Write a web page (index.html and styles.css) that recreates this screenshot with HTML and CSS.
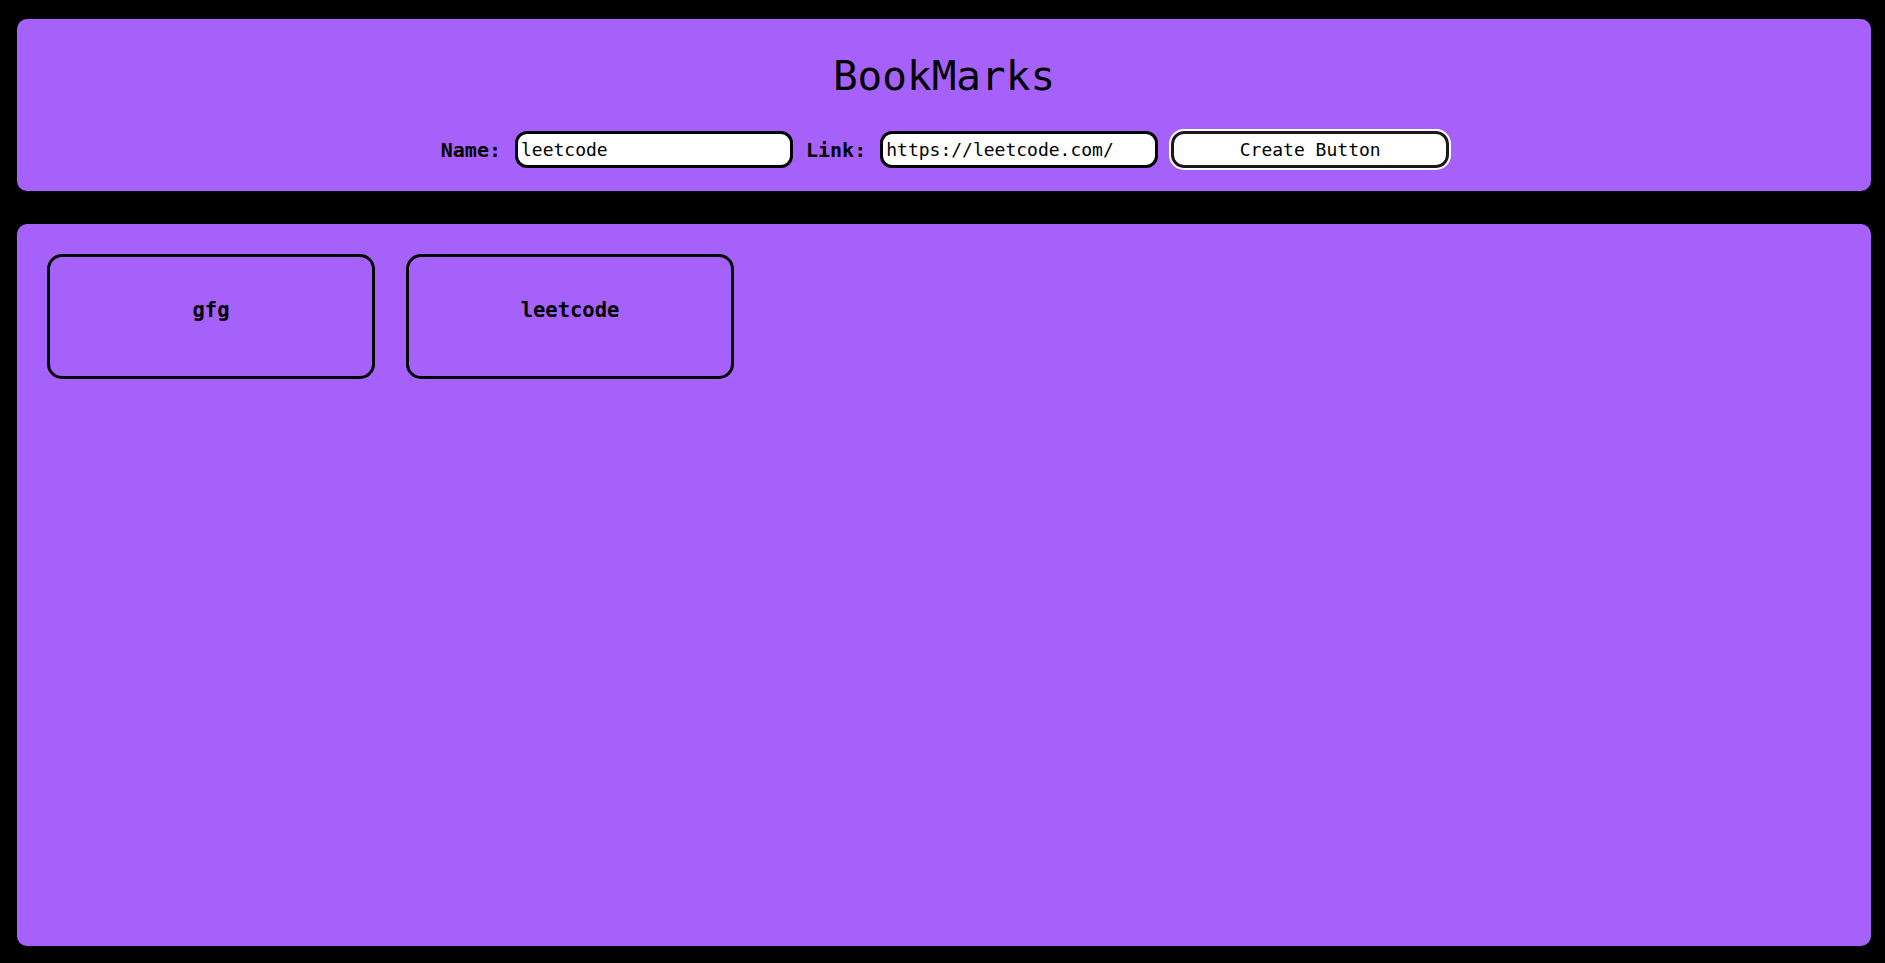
FILE: index.html
```html
<!DOCTYPE html>
<html lang="en">
<head>
<meta charset="utf-8">
<title>BookMarks</title>
<link rel="stylesheet" href="styles.css">
</head>
<body>
  <header class="panel header">
    <h1 class="title">BookMarks</h1>
    <form class="form-row">
      <label class="label" for="name">Name:</label>
      <input class="field" id="name" type="text" value="leetcode">
      <label class="label" for="link">Link:</label>
      <input class="field" id="link" type="text" value="https://leetcode.com/">
      <button class="create-btn" type="button">Create Button</button>
    </form>
  </header>
  <main class="panel board">
    <div class="card">gfg</div>
    <div class="card">leetcode</div>
  </main>
</body>
</html>
```

FILE: styles.css
```css
html, body {
  height: 100%;
}
body {
  margin: 0;
  box-sizing: border-box;
  padding: 19px 14px 17px 17px;
  background: #000;
  display: flex;
  flex-direction: column;
  gap: 33px;
  font-family: "DejaVu Sans Mono", "Liberation Mono", monospace;
  color: #000;
}
.panel {
  background: #a661fa;
  border-radius: 10px;
}
.header {
  padding: 34px 0 23px;
}
.title {
  margin: 0;
  text-align: center;
  font-size: 41px;
  line-height: 46px;
  font-weight: 400;
}
.form-row {
  margin: 32px 0 0;
  display: flex;
  justify-content: center;
  align-items: center;
  padding-left: 2px;
}
.label {
  font-size: 20px;
  font-weight: 700;
  margin-right: 14px;
}
.field {
  box-sizing: border-box;
  width: 278px;
  height: 37px;
  border: 3px solid #000;
  border-radius: 12px;
  background: #fff;
  padding: 0 4px 0 3px;
  font-family: "DejaVu Sans Mono", "Liberation Mono", monospace;
  font-size: 18px;
  color: #000;
  margin-right: 13px;
  outline: none;
}
.create-btn {
  box-sizing: border-box;
  width: 278px;
  height: 37px;
  border: 3px solid #1a1a1a;
  border-radius: 13px;
  background: #fff;
  outline: 2px solid #fff;
  font-family: "DejaVu Sans Mono", "Liberation Mono", monospace;
  font-size: 18px;
  color: #000;
  padding: 0;
}
.board {
  flex: 1;
  padding: 30px;
  display: flex;
  align-items: flex-start;
  gap: 31px;
}
.card {
  box-sizing: border-box;
  width: 328px;
  height: 125px;
  border: 3px solid #000;
  border-radius: 15px;
  padding-top: 41px;
  text-align: center;
  font-size: 20.5px;
  font-weight: 700;
}
```
